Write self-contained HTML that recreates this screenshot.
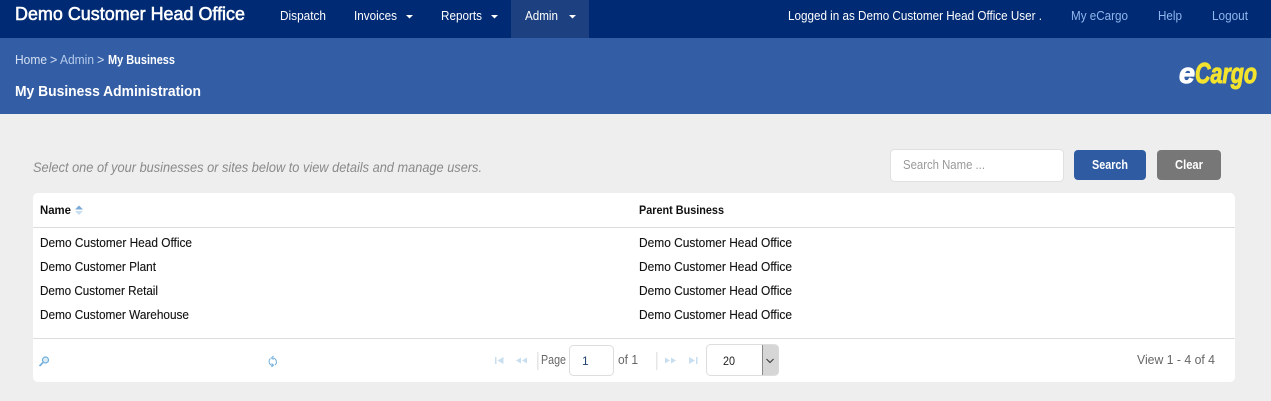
<!DOCTYPE html>
<html>
<head>
<meta charset="utf-8">
<title>My Business Administration</title>
<style>
html,body{margin:0;padding:0;background:#eeeeee;width:1271px;height:401px;overflow:hidden}
svg{display:block;font-family:"Liberation Sans",sans-serif}
text{white-space:pre}
.n{font-size:13px;fill:#fff}
.l{font-size:13px;fill:#8fb6ee}
.t{font-size:13px;fill:#111;stroke:#111;stroke-width:.12px}
.g{font-size:13px;fill:#666}
</style>
</head>
<body>
<svg width="1271" height="401" viewBox="0 0 1271 401" xmlns="http://www.w3.org/2000/svg">
<rect width="1271" height="401" fill="#eeeeee"/>
<rect width="1271" height="38" fill="#002a73"/>
<rect y="38" width="1271" height="76" fill="#335ea5"/>
<rect x="511" width="78" height="38" fill="#1d4180"/>

<text x="15" y="20" font-size="18" fill="#fff" stroke="#fff" stroke-width=".55" textLength="230" lengthAdjust="spacingAndGlyphs">Demo Customer Head Office</text>
<text class="n" x="280" y="20" textLength="46" lengthAdjust="spacingAndGlyphs">Dispatch</text>
<text class="n" x="354" y="20" textLength="43" lengthAdjust="spacingAndGlyphs">Invoices</text>
<path d="M406 15h7l-3.500 3.500z" fill="#fff"/>
<text class="n" x="441" y="20" textLength="41" lengthAdjust="spacingAndGlyphs">Reports</text>
<path d="M491 15h7l-3.500 3.500z" fill="#fff"/>
<text class="n" x="525" y="20" textLength="33" lengthAdjust="spacingAndGlyphs">Admin</text>
<path d="M569 15h7l-3.500 3.500z" fill="#fff"/>

<text class="n" x="788" y="20" textLength="254" lengthAdjust="spacingAndGlyphs">Logged in as Demo Customer Head Office User .</text>
<text class="l" x="1071" y="20" textLength="57" lengthAdjust="spacingAndGlyphs">My eCargo</text>
<text class="l" x="1158" y="20" textLength="24" lengthAdjust="spacingAndGlyphs">Help</text>
<text class="l" x="1212" y="20" textLength="36" lengthAdjust="spacingAndGlyphs">Logout</text>

<text x="15" y="64" font-size="12.500" fill="#d5e1f3" textLength="32" lengthAdjust="spacingAndGlyphs">Home</text>
<text x="50" y="64" font-size="12.500" fill="#d5e1f3">&gt;</text>
<text x="60" y="64" font-size="12.500" fill="#b5cbec" textLength="34" lengthAdjust="spacingAndGlyphs">Admin</text>
<text x="97" y="64" font-size="12.500" fill="#d5e1f3">&gt;</text>
<text x="108" y="64" font-size="12.500" font-weight="bold" fill="#fff" textLength="67" lengthAdjust="spacingAndGlyphs">My Business</text>
<text x="15" y="96" font-size="15" font-weight="bold" fill="#fff" textLength="186" lengthAdjust="spacingAndGlyphs">My Business Administration</text>

<text x="1179" y="83" font-size="29" font-weight="bold" font-style="italic" fill="#fff" stroke="#fff" stroke-width="1" textLength="16" lengthAdjust="spacingAndGlyphs">e</text>
<text x="1195" y="83" font-size="29" font-weight="bold" font-style="italic" fill="#f3e32e" stroke="#f3e32e" stroke-width="1" textLength="62" lengthAdjust="spacingAndGlyphs">Cargo</text>

<text x="33" y="172" font-size="14" font-style="italic" fill="#8a8a8a" textLength="449" lengthAdjust="spacingAndGlyphs">Select one of your businesses or sites below to view details and manage users.</text>

<rect x="890.500" y="149.500" width="173" height="32" rx="4" fill="#fff" stroke="#e0e0e0"/>
<text x="903" y="169" font-size="12.500" fill="#999" textLength="82" lengthAdjust="spacingAndGlyphs">Search Name ...</text>
<rect x="1074" y="150" width="72" height="30" rx="4" fill="#2f5ba3"/>
<text x="1092" y="169" font-size="12.500" font-weight="bold" fill="#fff" textLength="36" lengthAdjust="spacingAndGlyphs">Search</text>
<rect x="1157" y="150" width="64" height="30" rx="4" fill="#777777"/>
<text x="1175" y="169" font-size="12.500" font-weight="bold" fill="#fff" textLength="28" lengthAdjust="spacingAndGlyphs">Clear</text>

<rect x="33" y="193" width="1202" height="189" rx="5" fill="#fff"/>
<rect x="33" y="227" width="1202" height="1" fill="#dddddd"/>
<rect x="33" y="338" width="1202" height="1" fill="#dddddd"/>

<text x="40" y="214" font-size="12" font-weight="bold" fill="#111" textLength="31" lengthAdjust="spacingAndGlyphs">Name</text>
<path d="M75 209.500l4-4 4 4z" fill="#7aa9d8"/>
<path d="M75 211h8l-4 4z" fill="#c8def2"/>
<text x="639" y="214" font-size="12" font-weight="bold" fill="#111" textLength="85" lengthAdjust="spacingAndGlyphs">Parent Business</text>

<text class="t" x="40" y="247" textLength="152" lengthAdjust="spacingAndGlyphs">Demo Customer Head Office</text>
<text class="t" x="639" y="247" textLength="153" lengthAdjust="spacingAndGlyphs">Demo Customer Head Office</text>
<text class="t" x="40" y="271" textLength="116" lengthAdjust="spacingAndGlyphs">Demo Customer Plant</text>
<text class="t" x="639" y="271" textLength="153" lengthAdjust="spacingAndGlyphs">Demo Customer Head Office</text>
<text class="t" x="40" y="295" textLength="118" lengthAdjust="spacingAndGlyphs">Demo Customer Retail</text>
<text class="t" x="639" y="295" textLength="153" lengthAdjust="spacingAndGlyphs">Demo Customer Head Office</text>
<text class="t" x="40" y="319" textLength="149" lengthAdjust="spacingAndGlyphs">Demo Customer Warehouse</text>
<text class="t" x="639" y="319" textLength="153" lengthAdjust="spacingAndGlyphs">Demo Customer Head Office</text>

<circle cx="45.500" cy="360" r="3" fill="#dcecf8" stroke="#6eaedc" stroke-width="1.200"/>
<path d="M43 362.500l-3.500 3.500" stroke="#6eaedc" stroke-width="1.600" fill="none"/>
<path d="M270.500 358.500a4 4 0 0 0 2 7M275 365a4 4 0 0 0-2-7" fill="none" stroke="#6eaedc" stroke-width="1"/>
<path d="M273.500 356l-2 2 2 1.500M271.500 367l2-2-2-1.500" fill="none" stroke="#6eaedc" stroke-width="1"/>

<g fill="#c9dff0">
<rect x="495" y="357" width="1.500" height="7"/><path d="M503.500 357v7l-6-3.500z"/>
<path d="M521 357.500v6l-5-3zM527 357.500v6l-5-3z"/>
<path d="M665 357.500v6l5-3zM671 357.500v6l5-3z"/>
<path d="M689 357v7l6-3.500z"/><rect x="696" y="357" width="1.500" height="7"/>
</g>
<rect x="537" y="352" width="1.500" height="18" fill="#e6e6e6"/>
<rect x="656" y="352" width="1.500" height="18" fill="#e6e6e6"/>

<text class="g" x="541" y="364" textLength="25" lengthAdjust="spacingAndGlyphs">Page</text>
<rect x="569.500" y="345.500" width="44" height="30" rx="4" fill="#fff" stroke="#dddddd"/>
<text x="582" y="365" font-size="12" fill="#24456f">1</text>
<text class="g" x="618" y="364" textLength="20" lengthAdjust="spacingAndGlyphs">of 1</text>

<rect x="706.500" y="344.500" width="72" height="31" rx="4" fill="#fff" stroke="#dddddd"/>
<path d="M762 345h13a3.500 3.500 0 0 1 3.500 3.500v23a3.500 3.500 0 0 1-3.500 3.500h-13z" fill="#d6d6d6"/>
<rect x="762" y="345" width="1" height="30" fill="#8a8a8a"/>
<path d="M766.500 359l3.500 3.500 3.500-3.500" fill="none" stroke="#333" stroke-width="1"/>
<text x="723" y="365" font-size="12" fill="#222" textLength="12" lengthAdjust="spacingAndGlyphs">20</text>

<text class="g" x="1137" y="364" textLength="78" lengthAdjust="spacingAndGlyphs">View 1 - 4 of 4</text>
</svg>
</body>
</html>
